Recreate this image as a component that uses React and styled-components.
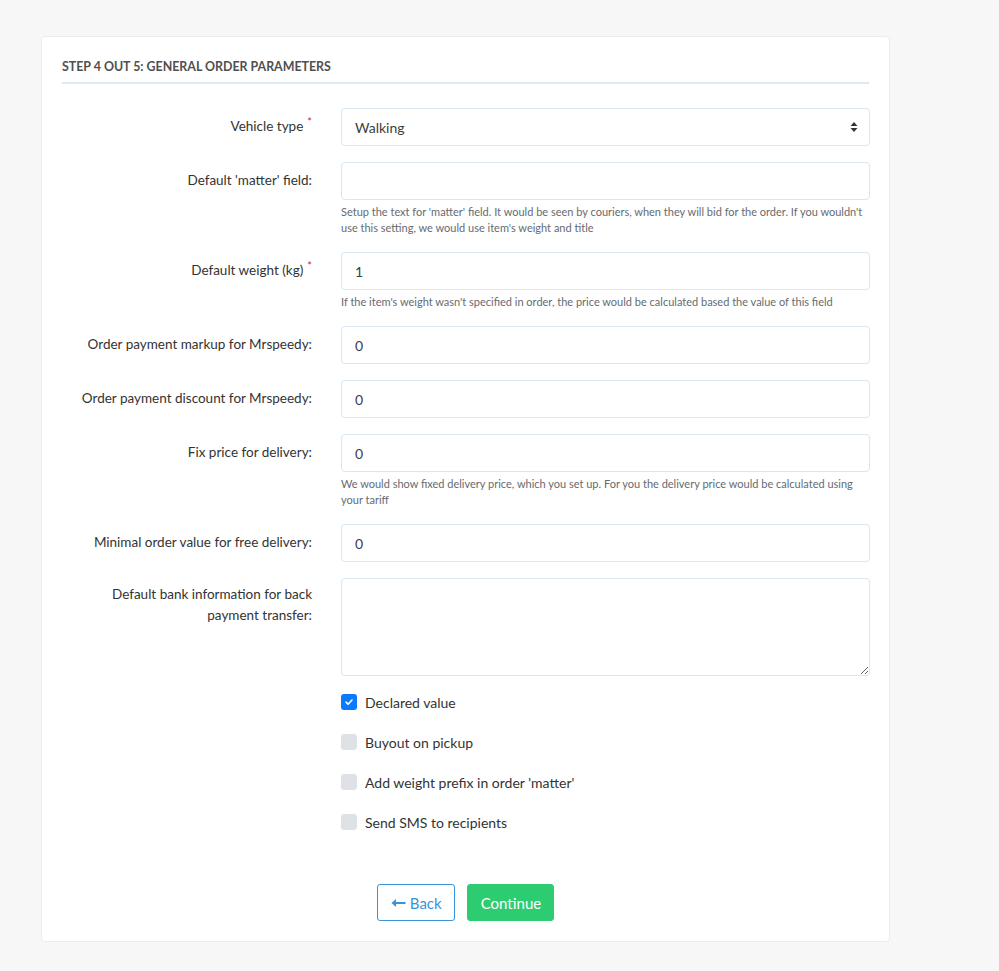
import React from 'react'
import styled, { createGlobalStyle } from 'styled-components'

const GlobalStyle = createGlobalStyle`
  body {
    margin: 0;
    background: #f7f7f7;
    font-family: Lato, "Open Sans", sans-serif;
  }
`

const Page = styled.div`
  padding: 36px 0 30px 41px;
`

const Card = styled.div`
  width: 849px;
  box-sizing: border-box;
  background: #fff;
  border: 1px solid #ececec;
  border-radius: 4px;
  padding: 20px 20px 20px 20px;
`

const Title = styled.h3`
  margin: 2px 0 24px;
  padding: 0 0 7px;
  font-size: 12.4px;
  font-weight: 700;
  color: #4f4f4f;
  text-transform: uppercase;
  border-bottom: 2px solid #dbe9f8;
  line-height: 16px;
`

const Row = styled.div`
  display: grid;
  grid-template-columns: 250px 529px;
  column-gap: 29px;
  margin-bottom: ${p => p.$mb ?? 16}px;
`

const Label = styled.label`
  text-align: right;
  font-size: 13.5px;
  color: #333;
  line-height: 21px;
  padding-top: ${p => p.$pt || 8}px;
`

const Star = styled.span`
  color: #e3262c;
  font-size: 11px;
  margin-left: 4px;
  position: relative;
  top: -5px;
`

const Field = styled.div`
  display: flex;
  flex-direction: column;
`

const Input = styled.input`
  box-sizing: border-box;
  height: 38px;
  width: 100%;
  border: 1px solid #d8e6f6;
  border-radius: 4px;
  padding: 0 13px;
  font-family: Lato, "Open Sans", sans-serif;
  font-size: 14px;
  color: #3a3f44;
  outline: none;
`

const SelectBox = styled.div`
  box-sizing: border-box;
  height: 38px;
  border: 1px solid #d8e6f6;
  border-radius: 4px;
  padding: 0 11px 0 13px;
  display: flex;
  align-items: center;
  justify-content: space-between;
  font-size: 14px;
  color: #3a3f44;
`

const TextArea = styled.textarea`
  box-sizing: border-box;
  width: 100%;
  height: 98px;
  border: 1px solid #d8e6f6;
  border-radius: 4px;
  font-family: Lato, sans-serif;
  outline: none;
  display: block;
`

const Help = styled.div`
  margin-top: 4px;
  font-size: 11px;
  line-height: 16px;
  color: #666b70;
`

const Checks = styled.div`
  display: flex;
  flex-direction: column;
  gap: 20px;
  margin: 16px 0 0 279px;
`

const CheckRow = styled.label`
  display: flex;
  align-items: center;
  gap: 8px;
  font-size: 14px;
  color: #333;
  height: 20px;
`

const Box = styled.span`
  width: 16px;
  height: 16px;
  border-radius: 3px;
  background: ${p => (p.$on ? '#0a7bff' : '#dee2e6')};
  display: flex;
  align-items: center;
  justify-content: center;
`

const Actions = styled.div`
  display: flex;
  justify-content: center;
  gap: 12px;
  margin-top: 52px;
`

const Button = styled.button`
  height: 37px;
  padding: 0 12px 0 13px;
  border-radius: 3px;
  font-family: Lato, sans-serif;
  font-size: 15px;
  cursor: pointer;
  display: flex;
  align-items: center;
  gap: 4px;
  border: 1px solid ${p => (p.$primary ? '#2ecc71' : '#3a93d8')};
  background: ${p => (p.$primary ? '#2ecc71' : '#fff')};
  color: ${p => (p.$primary ? '#fff' : '#3a93d8')};
`

const Arrows = () => (
  <svg width="8" height="12" viewBox="0 0 8 12">
    <path d="M4 1 L7.5 5 H0.5 Z M4 11 L7.5 7 H0.5 Z" fill="#333" />
  </svg>
)

const Tick = () => (
  <svg width="10" height="10" viewBox="0 0 10 10">
    <path d="M2 5.2 L4.1 7.2 L8 3" stroke="#fff" strokeWidth="1.6" fill="none" strokeLinecap="round" strokeLinejoin="round" />
  </svg>
)

const BackArrow = () => (
  <svg width="15" height="10" viewBox="0 0 15 10">
    <path d="M0.5 5 L5 1 V4 H14.5 V6 H5 V9 Z" fill="#3a93d8" />
  </svg>
)

const checks = [
  ['Declared value', true],
  ['Buyout on pickup', false],
  ["Add weight prefix in order 'matter'", false],
  ['Send SMS to recipients', false],
]

const App = () => {
  return (
    <Page>
      <GlobalStyle />
      <Card>
        <Title>Step 4 out 5: General order parameters</Title>

        <Row>
          <Label>Vehicle type<Star>*</Star></Label>
          <SelectBox>Walking<Arrows /></SelectBox>
        </Row>

        <Row>
          <Label>Default 'matter' field:</Label>
          <Field>
            <Input />
            <Help>
              Setup the text for 'matter' field. It would be seen by couriers, when they will bid for the order. If you wouldn't use this setting, we would use item's weight and title
            </Help>
          </Field>
        </Row>

        <Row>
          <Label>Default weight (kg)<Star>*</Star></Label>
          <Field>
            <Input defaultValue="1" />
            <Help>If the item's weight wasn't specified in order, the price would be calculated based the value of this field</Help>
          </Field>
        </Row>

        <Row>
          <Label>Order payment markup for Mrspeedy:</Label>
          <Input defaultValue="0" />
        </Row>

        <Row>
          <Label>Order payment discount for Mrspeedy:</Label>
          <Input defaultValue="0" />
        </Row>

        <Row>
          <Label>Fix price for delivery:</Label>
          <Field>
            <Input defaultValue="0" />
            <Help>We would show fixed delivery price, which you set up. For you the delivery price would be calculated using your tariff</Help>
          </Field>
        </Row>

        <Row>
          <Label>Minimal order value for free delivery:</Label>
          <Input defaultValue="0" />
        </Row>

        <Row $mb={0}>
          <Label $pt={6}>Default bank information for back payment transfer:</Label>
          <TextArea />
        </Row>

        <Checks>
          {checks.map(([text, on]) => (
            <CheckRow key={text}>
              <Box $on={on}>{on && <Tick />}</Box>
              {text}
            </CheckRow>
          ))}
        </Checks>

        <Actions>
          <Button><BackArrow />Back</Button>
          <Button $primary>Continue</Button>
        </Actions>
      </Card>
    </Page>
  )
}

export default App
